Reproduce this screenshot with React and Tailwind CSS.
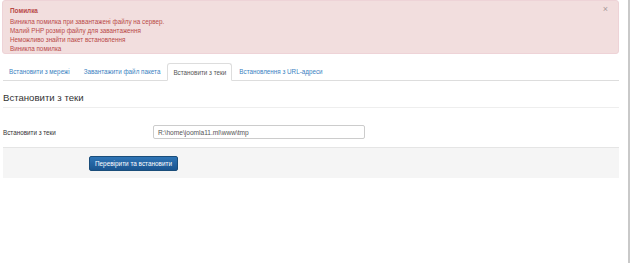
export default function App() {
  return (
    <div className="relative w-[631px] h-[263px] bg-white overflow-hidden" style={{ fontFamily: '"Liberation Sans", Arial, sans-serif' }}>
      <div className="absolute top-0 bottom-0 right-[1px] w-[2px] bg-[#c9c9c9]" />
      <div className="pl-[3px] pr-[12px]">
        <div className="relative mt-0 ml-[-1px] h-[54px] rounded-[3px] border border-[#eed3d7] bg-[#f2dede] pl-[7px] pt-[5px] text-[#b94a48]">
          <div className="text-[6.4px] font-bold leading-[9px]">Помилка</div>
          <div className="mt-[2px] text-[6.3px] leading-[9px]">
            <div>Виникла помилка при завантажені файлу на сервер.</div>
            <div>Малий PHP розмір файлу для завантаження</div>
            <div>Неможливо знайти пакет встановлення</div>
            <div>Виникла помилка</div>
          </div>
          <span className="absolute right-[10px] top-[3px] text-[9px] leading-[10px] text-[#a89a9a]">×</span>
        </div>

        <div className="mt-[10px] flex h-[17px] items-end border-b border-[#dddddd] text-[6.3px] leading-[9px]">
          <div className="px-[6px] pb-[4px] text-[#3a7fc1]">Встановити з мережі</div>
          <div className="ml-[2px] px-[6px] pb-[4px] text-[#3a7fc1]">Завантажити файл пакета</div>
          <div className="ml-[1px] mb-[-1px] flex h-[18px] items-center rounded-t-[3px] border border-[#dddddd] border-b-white bg-white px-[5px] text-[#555555]">Встановити з теки</div>
          <div className="ml-[1px] px-[6px] pb-[4px] text-[#3a7fc1]">Встановлення з URL-адреси</div>
        </div>

        <div className="mt-[10px] border-b border-[#eeeeee] pb-[3px] text-[9.6px] leading-[13px] text-[#333333]">Встановити з теки</div>

        <div className="mt-[17px] flex items-center">
          <div className="w-[150px] text-[6.3px] leading-[9px] text-[#333333]">Встановити з теки</div>
          <div className="flex h-[14px] w-[212px] items-center rounded-[2px] border border-[#cccccc] bg-white px-[4px] text-[6.6px] leading-[9px] text-[#555555]">R:\home\joomla11.ml\www\tmp</div>
        </div>

        <div className="mt-[8px] h-[31px] border-t border-[#e5e5e5] bg-[#f5f5f5] pl-[86px] pt-[8px]">
          <div className="flex h-[15px] w-[89px] items-center justify-center rounded-[2px] border border-[#1a4d7a] bg-gradient-to-b from-[#2e74b5] to-[#1a5590] text-[6.4px] leading-[9px] text-white">Перевірити та встановити</div>
        </div>
      </div>
    </div>
  );
}
